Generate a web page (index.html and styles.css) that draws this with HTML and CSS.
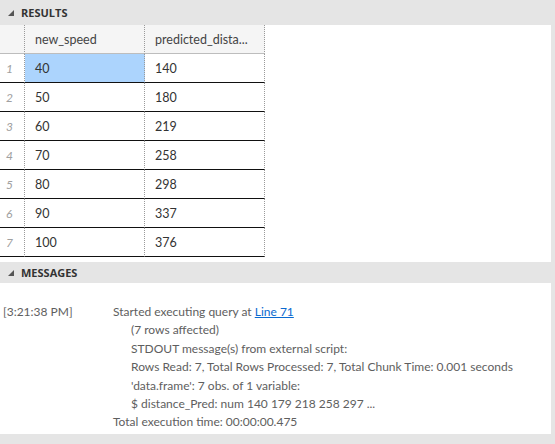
FILE: index.html
```html
<!DOCTYPE html>
<html>
<head>
<meta charset="utf-8">
<link rel="stylesheet" href="styles.css">
</head>
<body>
<div class="pane">
  <div class="section-header results-header">
    <svg class="tri" width="6" height="6" viewBox="0 0 6 6"><polygon points="6,0 6,6 0,6" fill="#555"/></svg>
    <span>RESULTS</span>
  </div>
  <div class="results">
    <div class="grid">
      <div class="hcell rn"></div>
      <div class="hcell">new_speed</div>
      <div class="hcell">predicted_dista...</div>

      <div class="cell rn">1</div><div class="cell sel">40</div><div class="cell">140</div>
      <div class="cell rn">2</div><div class="cell">50</div><div class="cell">180</div>
      <div class="cell rn">3</div><div class="cell">60</div><div class="cell">219</div>
      <div class="cell rn">4</div><div class="cell">70</div><div class="cell">258</div>
      <div class="cell rn">5</div><div class="cell">80</div><div class="cell">298</div>
      <div class="cell rn">6</div><div class="cell">90</div><div class="cell">337</div>
      <div class="cell rn">7</div><div class="cell">100</div><div class="cell">376</div>
    </div>
  </div>
  <div class="section-header messages-header">
    <svg class="tri" width="6" height="6" viewBox="0 0 6 6"><polygon points="6,0 6,6 0,6" fill="#555"/></svg>
    <span>MESSAGES</span>
  </div>
  <div class="messages">
    <div class="msg">
      <div class="time">[3:21:38 PM]</div>
      <div class="body">
        <div class="line">Started executing query at <a class="link" href="#">Line 71</a></div>
        <div class="line indent">(7 rows affected)</div>
        <div class="line indent">STDOUT message(s) from external script:</div>
        <div class="line indent">Rows Read: 7, Total Rows Processed: 7, Total Chunk Time: 0.001 seconds</div>
        <div class="line indent">'data.frame': 7 obs. of 1 variable:</div>
        <div class="line indent">$ distance_Pred: num 140 179 218 258 297 ...</div>
        <div class="line">Total execution time: 00:00:00.475</div>
      </div>
    </div>
  </div>
</div>
</body>
</html>
```

FILE: styles.css
```css
html, body {
  margin: 0;
  padding: 0;
  background: #e5e5e5;
  font-family: "Lato", "Open Sans", sans-serif;
  color: #333;
}

.pane {
  width: 551px;
}

.section-header {
  display: flex;
  align-items: center;
  gap: 7px;
  padding-left: 8px;
  font-family: "Open Sans", sans-serif;
  font-size: 11px;
  font-weight: bold;
  color: #333;
  background: #e5e5e5;
}

.results-header {
  height: 25px;
}

.messages-header {
  height: 21px;
}

.tri {
  display: block;
  margin-top: 1px;
}

.results {
  background: #fff;
  height: 237px;
}

.grid {
  display: grid;
  grid-template-columns: 25px 120px 120px;
  width: 265px;
}

.hcell {
  height: 28px;
  background: #f5f5f5;
  border-right: 1px dotted #9a9a9a;
  border-bottom: 1px solid #bdbdbd;
  font-size: 12.5px;
  color: #444;
  display: flex;
  align-items: center;
  padding-left: 10px;
}

.hcell.rn {
  padding-left: 0;
}

.cell {
  height: 28px;
  border-right: 1px dotted #9a9a9a;
  border-bottom: 1px solid #111;
  font-size: 12.5px;
  color: #333;
  display: flex;
  align-items: center;
  padding-left: 10px;
}

.cell.rn {
  padding-left: 6px;
  font-style: italic;
  color: #a0a0a0;
  font-size: 12px;
}

.cell.sel {
  background: #acd4fd;
}

.messages {
  background: #fff;
  height: 151px;
  font-size: 12px;
  color: #5e5e5e;
}

.msg {
  display: flex;
  padding-top: 21px;
  padding-left: 3px;
}

.time {
  width: 110px;
}

.line {
  height: 18.4px;
  white-space: nowrap;
}

.indent {
  padding-left: 18px;
}

.link {
  color: #0a6ad0;
  text-decoration: underline;
}
```
